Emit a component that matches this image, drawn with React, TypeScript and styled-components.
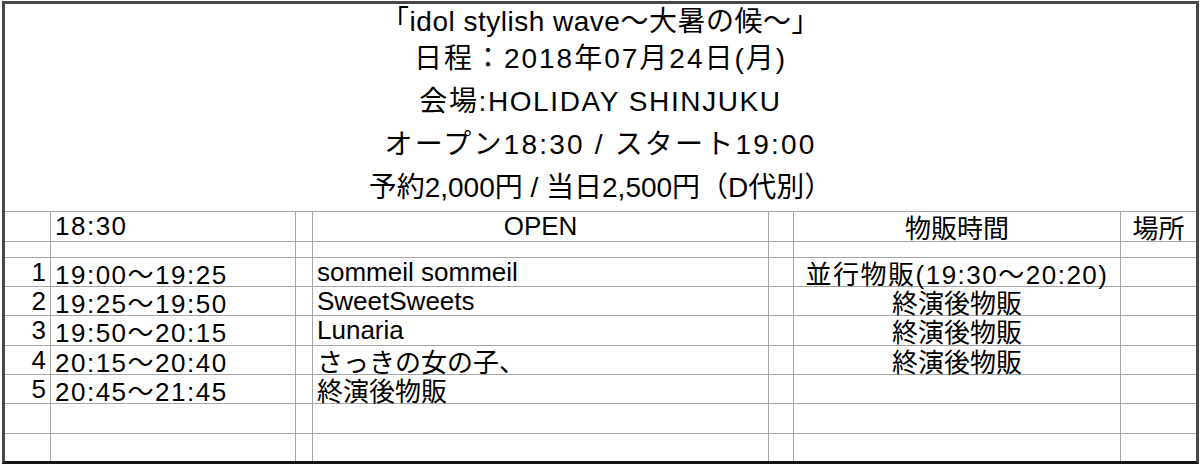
import styled, { createGlobalStyle } from "styled-components";

const GlobalStyle = createGlobalStyle`
  html, body {
    margin: 0;
    padding: 0;
    background: #ffffff;
  }
  body {
    font-family: "Liberation Sans", "Noto Sans CJK JP", sans-serif;
    color: #000;
  }
`;

const Sheet = styled.div`
  margin: 1px 0 0 2px;
  width: 1197px;
  box-sizing: border-box;
  border: 3px solid #484848;
  border-bottom: 3px solid #151515;
`;

const Header = styled.div`
  display: flex;
  flex-direction: column;
  height: 208px;
  box-sizing: border-box;
  border-bottom: 1px solid #a6a6a6;
`;

const HeaderLine = styled.div<{ $h: number; $spacing: number }>`
  height: ${(p) => p.$h}px;
  display: flex;
  align-items: center;
  justify-content: center;
  font-size: 28px;
  letter-spacing: ${(p) => p.$spacing}px;
  white-space: nowrap;
`;

const Grid = styled.div`
  display: grid;
  grid-template-columns: 46px 245px 17px 456px 25px 327px 75px;
`;

const Cell = styled.div<{
  $h: number;
  $align?: "left" | "center" | "right";
  $last?: boolean;
  $bottom?: boolean;
  $digits?: boolean;
}>`
  height: ${(p) => p.$h}px;
  box-sizing: border-box;
  border-right: ${(p) => (p.$last ? "none" : "1px solid #a6a6a6")};
  border-bottom: ${(p) => (p.$bottom ? "none" : "1px solid #a6a6a6")};
  display: flex;
  align-items: center;
  justify-content: ${(p) =>
    p.$align === "center" ? "center" : p.$align === "right" ? "flex-end" : "flex-start"};
  padding: 0 4px;
  font-size: 26px;
  letter-spacing: ${(p) => (p.$digits ? "1.5px" : "0")};
  white-space: nowrap;
`;

type Row = {
  h: number;
  no?: string;
  time?: string;
  name?: string;
  goods?: string;
  place?: string;
  nameCenter?: boolean;
};

const rows: Row[] = [
  { h: 30, time: "18:30", name: "OPEN", nameCenter: true, goods: "物販時間", place: "場所" },
  { h: 16 },
  { h: 29, no: "1", time: "19:00〜19:25", name: "sommeil sommeil", goods: "並行物販(19:30〜20:20)" },
  { h: 29, no: "2", time: "19:25〜19:50", name: "SweetSweets", goods: "終演後物販" },
  { h: 30, no: "3", time: "19:50〜20:15", name: "Lunaria", goods: "終演後物販" },
  { h: 29, no: "4", time: "20:15〜20:40", name: "さっきの女の子、", goods: "終演後物販" },
  { h: 29, no: "5", time: "20:45〜21:45", name: "終演後物販" },
  { h: 30 },
  { h: 27 },
];

const headerLines = [
  { h: 30, spacing: 0.5, text: "「idol stylish wave〜大暑の候〜」" },
  { h: 43, spacing: 2, text: "日程：2018年07月24日(月)" },
  { h: 43, spacing: 1.6, text: "会場:HOLIDAY SHINJUKU" },
  { h: 43, spacing: 2.2, text: "オープン18:30 / スタート19:00" },
  { h: 43, spacing: 0, text: "予約2,000円 / 当日2,500円（D代別）" },
];

export default function App() {
  return (
    <>
      <GlobalStyle />
      <Sheet>
        <Header>
          {headerLines.map((l, i) => (
            <HeaderLine key={i} $h={l.h} $spacing={l.spacing}>
              {l.text}
            </HeaderLine>
          ))}
        </Header>
        <Grid>
          {rows.map((r, i) => {
            const bottom = i === rows.length - 1;
            return [
              <Cell key={`${i}a`} $h={r.h} $align="right" $bottom={bottom}>
                {r.no}
              </Cell>,
              <Cell key={`${i}b`} $h={r.h} $bottom={bottom} $digits>
                {r.time}
              </Cell>,
              <Cell key={`${i}c`} $h={r.h} $bottom={bottom} />,
              <Cell key={`${i}d`} $h={r.h} $align={r.nameCenter ? "center" : "left"} $bottom={bottom}>
                {r.name}
              </Cell>,
              <Cell key={`${i}e`} $h={r.h} $bottom={bottom} />,
              <Cell key={`${i}f`} $h={r.h} $align="center" $bottom={bottom} $digits={i === 2}>
                {r.goods}
              </Cell>,
              <Cell key={`${i}g`} $h={r.h} $align="center" $last $bottom={bottom}>
                {r.place}
              </Cell>,
            ];
          })}
        </Grid>
      </Sheet>
    </>
  );
}
